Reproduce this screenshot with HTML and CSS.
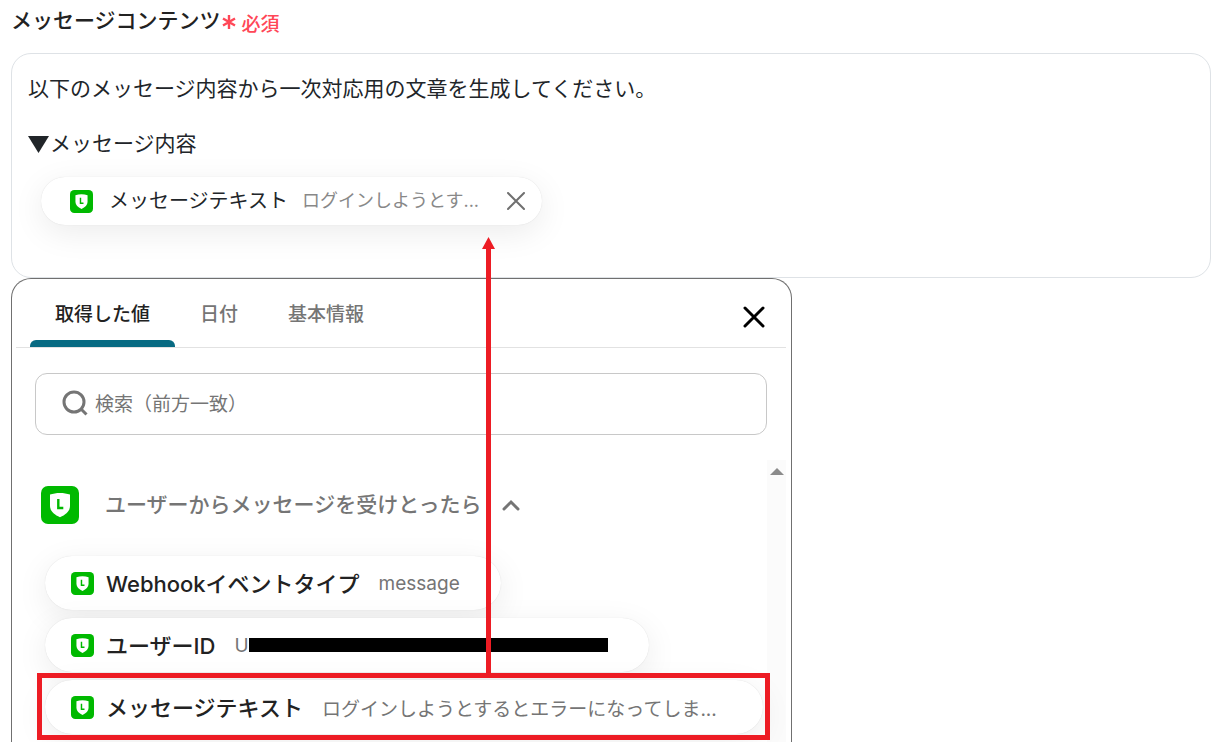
FILE: index.html
```html
<!DOCTYPE html>
<html lang="ja">
<head>
<meta charset="utf-8">
<meta name="viewport" content="width=device-width, initial-scale=1">
<title>メッセージコンテンツ</title>
<link rel="stylesheet" href="styles.css">
</head>
<body>
<svg class="sprite" aria-hidden="true">
  <symbol id="shield" viewBox="0 0 38 38">
    <rect width="38" height="38" rx="7" fill="#00b900"/>
    <path d="M19 7c3.500 0 7 .600 10 1.600V20c0 5-4 8.500-10 11.300C13 28.500 9 25 9 20V8.600C12 7.600 15.500 7 19 7z" fill="#fff"/>
    <path d="M17.300 13v9h5" fill="none" stroke="#00b900" stroke-width="2.400"/>
  </symbol>
</svg>
<main class="field">
  <div class="field-head">
    <span class="field-label" id="content-label">メッセージコンテンツ</span>
    <span class="required"><svg class="star" viewBox="0 0 14 14" aria-hidden="true"><path d="M7 0v14M1 3.500l12 7M13 3.500l-12 7"/></svg>必須</span>
  </div>

  <div class="editor" role="textbox" aria-multiline="true" aria-labelledby="content-label">
    <p class="line">以下のメッセージ内容から一次対応用の文章を生成してください。</p>
    <p class="line line-heading"><svg class="marker" viewBox="0 0 21 17" aria-hidden="true"><path d="M0 0h21L10.500 17z"/></svg>メッセージ内容</p>
    <div class="chip">
      <svg class="icon-small"><use href="#shield"/></svg>
      <span class="chip-name">メッセージテキスト</span>
      <span class="chip-value">ログインしようとす...</span>
      <button class="chip-remove" type="button" aria-label="削除"><svg viewBox="0 0 18 18"><path d="M1 1l16 16M17 1L1 17"/></svg></button>
    </div>
  </div>

  <section class="panel">
    <div class="tabs" role="tablist">
      <button class="tab tab-active" type="button" role="tab" aria-selected="true">取得した値</button>
      <button class="tab" type="button" role="tab" aria-selected="false">日付</button>
      <button class="tab" type="button" role="tab" aria-selected="false">基本情報</button>
      <button class="close" type="button" aria-label="閉じる"><svg viewBox="0 0 22 22"><path d="M2 2l18 18M20 2L2 20"/></svg></button>
    </div>
    <label class="search">
      <svg viewBox="0 0 26 26" aria-hidden="true"><circle cx="12" cy="12" r="10"/><path d="M18.500 18.500l6 6"/></svg>
      <input class="search-input" type="search" placeholder="検索（前方一致）" aria-label="検索">
    </label>
    <div class="results">
      <div class="list">
        <button class="group" type="button" aria-expanded="true">
          <svg class="icon-large"><use href="#shield"/></svg>
          <span>ユーザーからメッセージを受けとったら</span>
          <svg class="chevron" viewBox="0 0 18 12"><path d="M2 10l7-7 7 7"/></svg>
        </button>
        <div class="items">
          <button class="item" type="button">
            <svg class="icon-small"><use href="#shield"/></svg>
            <span class="item-name">Webhookイベントタイプ</span>
            <span class="item-value">message</span>
          </button>
          <button class="item" type="button">
            <svg class="icon-small"><use href="#shield"/></svg>
            <span class="item-name">ユーザーID</span>
            <span class="item-value masked">U<span class="mask"></span></span>
          </button>
          <button class="item item-text" type="button">
            <svg class="icon-small"><use href="#shield"/></svg>
            <span class="item-name">メッセージテキスト</span>
            <span class="item-value">ログインしようとするとエラーになってしま...</span>
          </button>
          <span class="callout" aria-hidden="true"><svg class="arrow" viewBox="0 0 13 441"><path d="M6.500 0L13 12H9v429H4V12H0z"/></svg></span>
        </div>
      </div>
      <div class="scroll-track" aria-hidden="true"><svg viewBox="0 0 14 7"><path d="M0 7l7-7 7 7z"/></svg></div>
    </div>
  </section>
</main>
</body>
</html>
```

FILE: styles.css
```css
* { box-sizing: border-box; }

body {
  margin: 0;
  height: 100vh;
  overflow: hidden;
  background: #fff;
  color: #212529;
  font-family: Inter, "Noto Sans CJK JP", sans-serif;
}

button {
  padding: 0;
  border: 0;
  background: none;
  color: inherit;
  font: inherit;
  cursor: pointer;
}

svg { display: block; flex: none; }

.sprite { position: absolute; width: 0; height: 0; }

.field {
  display: flex;
  flex-direction: column;
  height: 100%;
  padding: 0 7px 0 11px;
}

.field-head {
  display: flex;
  align-items: center;
  gap: 1px;
  height: 53px;
  padding-bottom: 15px;
  color: #222;
}

.field-label { font-size: 21px; font-weight: 500; }

.required {
  display: flex;
  align-items: center;
  gap: 6px;
  padding-top: 6px;
  color: #ff4757;
  font-size: 19px;
  font-weight: 500;
}

.star { width: 14px; height: 14px; fill: none; stroke: #ff4757; stroke-width: 2.4; }

.editor {
  flex: none;
  min-height: 225px;
  padding: 17px 16px;
  border: 1px solid #dee2e6;
  border-radius: 20px;
  font-size: 21px;
  line-height: 36px;
}

.line { margin: 0; }
.line-heading { display: flex; align-items: center; gap: 1px; margin: 19px 0 15px; }
.marker { width: 21px; height: 17px; fill: #212529; }

.chip {
  display: flex;
  align-items: center;
  width: fit-content;
  height: 48px;
  margin-left: 13px;
  padding: 0 17px 0 29px;
  border-radius: 24px;
  background: #fff;
  box-shadow: 0 0 1px rgba(0, 0, 0, .15), 0 8px 32px rgba(0, 0, 0, .08);
}

.icon-small { width: 23px; height: 23px; }
.chip-name { margin: 0 14px 0 16px; font-size: 20px; }
.chip-value { color: #888; font-size: 18px; }
.chip-remove { margin-left: 28px; }
.chip-remove svg { width: 18px; height: 18px; fill: none; stroke: #707070; stroke-width: 2; stroke-linecap: round; }

.panel {
  display: flex;
  flex: 1;
  flex-direction: column;
  max-width: 781px;
  min-height: 0;
  border: 1px solid #707070;
  border-bottom: 0;
  border-radius: 20px 20px 0 0;
}

.tabs {
  display: flex;
  flex: none;
  height: 69px;
  margin: 0 5px 0 4px;
  padding: 0 21px 0 14px;
  border-bottom: 1px solid #e2e2e2;
}

.tab {
  position: relative;
  padding: 0 25px 2px;
  color: #757575;
  font-size: 19px;
  font-weight: 500;
}

.tab-active { color: #222; }
.tab-active::after {
  content: "";
  position: absolute;
  right: 0;
  bottom: 0;
  left: 0;
  height: 7px;
  border-radius: 6px 6px 0 0;
  background: #076a82;
}

.close { margin: 7px 0 0 auto; }
.close svg { width: 22px; height: 22px; fill: none; stroke: #000; stroke-width: 3; stroke-linecap: round; }

.search {
  display: flex;
  align-items: center;
  gap: 7px;
  flex: none;
  height: 62px;
  margin: 25px 24px 25px 23px;
  padding: 0 26px 2px;
  border: 1px solid #c8c8c8;
  border-radius: 12px;
}

.search svg { width: 26px; height: 26px; fill: none; stroke: #757575; stroke-width: 3; }

.search-input {
  flex: 1;
  min-width: 0;
  padding: 2px 0 0;
  border: 0;
  outline: 0;
  background: none;
  font-family: inherit;
  font-size: 19px;
}
.search-input::placeholder { color: #757575; opacity: 1; }

.results { display: flex; flex: 1; min-height: 0; margin-right: 5px; }
.list { flex: 1; min-width: 0; padding: 26px 0 0 29px; }

.scroll-track { flex: none; width: 19px; padding: 8px 0 0 3px; background: #fbfbfb; }
.scroll-track svg { width: 14px; height: 7px; fill: #8b8b8b; }

.group {
  display: flex;
  align-items: center;
  color: #757575;
  font-size: 21px;
  font-weight: 500;
  line-height: 38px;
}

.icon-large { width: 38px; height: 38px; margin-right: 26px; }
.chevron { width: 18px; height: 12px; margin-left: 20px; fill: none; stroke: #757575; stroke-width: 3; stroke-linecap: round; }

.items {
  position: relative;
  display: flex;
  flex-direction: column;
  align-items: flex-start;
  gap: 8px;
  margin-top: 32px;
  padding-left: 4px;
}

.item {
  display: flex;
  align-items: center;
  gap: 12px;
  height: 54px;
  padding: 0 41px 0 26px;
  border-radius: 27px;
  background: #fff;
  box-shadow: 0 0 1px rgba(0, 0, 0, .15), 0 8px 32px rgba(0, 0, 0, .08);
  white-space: nowrap;
}

.item-name { padding-bottom: 2px; color: #222; font-size: 22px; font-weight: 500; }
.item-value { margin-left: 7px; color: #757575; font-size: 19px; }
.item-text { padding-right: 46px; }

.masked { display: flex; align-items: center; }
.mask { width: 359px; height: 14px; background: #000; }

.callout {
  position: absolute;
  top: 117px;
  right: -3px;
  left: -4px;
  height: 67px;
  border: 5px solid #ed1c24;
}

.arrow {
  position: absolute;
  bottom: 57px;
  left: 440px;
  width: 13px;
  height: 441px;
  fill: #ed1c24;
}
```
